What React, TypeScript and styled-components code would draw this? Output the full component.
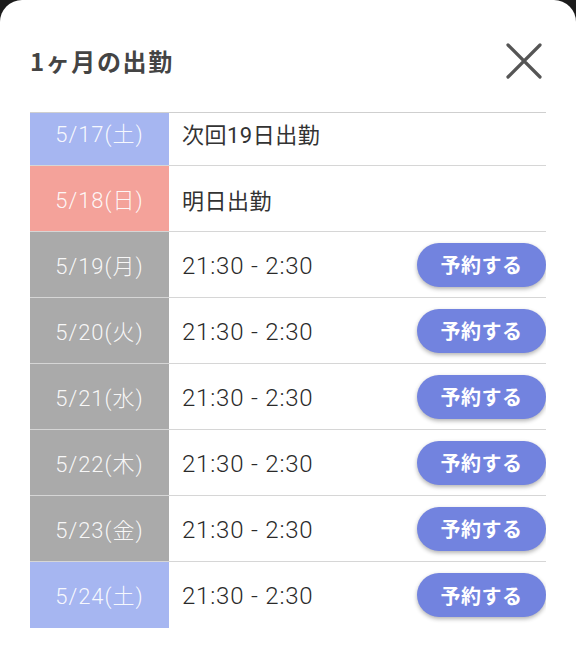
import { createGlobalStyle, styled } from "styled-components";

const GlobalStyle = createGlobalStyle`
  html, body {
    margin: 0;
    padding: 0;
    background: #1c1c1c;
  }
  body {
    font-family: Roboto, "Noto Sans CJK JP", sans-serif;
  }
`;

const Sheet = styled.div`
  background: #fff;
  height: 671px;
  border-radius: 22px 22px 0 0;
  padding: 0 30px;
  box-sizing: border-box;
  overflow: hidden;
`;

const Header = styled.div`
  height: 112px;
  display: flex;
  align-items: center;
  justify-content: space-between;
  padding-top: 8px;
  box-sizing: border-box;
`;

const Title = styled.h2`
  margin: 0;
  font-family: "Noto Sans CJK JP", sans-serif;
  font-size: 24px;
  font-weight: 700;
  color: #444;
  letter-spacing: 1.6px;
`;

const CloseButton = styled.button`
  border: none;
  background: none;
  padding: 0;
  width: 36px;
  height: 36px;
  margin-right: 4px;
  margin-top: 2px;
  cursor: pointer;
  display: flex;
  align-items: center;
  justify-content: center;
`;

const Viewport = styled.div`
  border-top: 1px solid #cfcfcf;
  height: 518px;
  overflow: hidden;
`;

const List = styled.div`
  margin-top: -13px;
`;

const Row = styled.div<{ $last?: boolean }>`
  display: flex;
  align-items: stretch;
  height: 66px;
  box-sizing: border-box;
  border-bottom: ${({ $last }) => ($last ? "none" : "1px solid #d6d6d6")};
`;

const dateColors = {
  sat: "#a6b6f1",
  sun: "#f4a29a",
  weekday: "#aaaaaa",
};

const DateCell = styled.div<{ $kind: keyof typeof dateColors }>`
  width: 139px;
  flex: none;
  background: ${({ $kind }) => dateColors[$kind]};
  color: rgba(255, 255, 255, 0.92);
  font-size: 22px;
  font-weight: 300;
  letter-spacing: 1px;
  display: flex;
  align-items: center;
  justify-content: center;
  padding-bottom: 2px;
  box-sizing: border-box;
`;

const Body = styled.div`
  flex: 1;
  display: flex;
  align-items: center;
  justify-content: space-between;
  padding-left: 13px;
`;

const Note = styled.span`
  font-size: 22px;
  letter-spacing: 0.5px;
  color: #333;
`;

const Time = styled.span`
  font-size: 24px;
  font-weight: 300;
  letter-spacing: 0.8px;
  color: #2a2a2a;
  padding-top: 2px;
`;

const ReserveButton = styled.button`
  width: 129px;
  height: 44px;
  border: none;
  border-radius: 22px;
  background: #7283df;
  color: #fff;
  font-family: "Noto Sans CJK JP", sans-serif;
  font-size: 20px;
  font-weight: 700;
  letter-spacing: 0.5px;
  box-shadow: 0 2px 4px rgba(0, 0, 0, 0.3);
  cursor: pointer;
`;

type Day = {
  date: string;
  kind: keyof typeof dateColors;
  note?: string;
  time?: string;
};

const days: Day[] = [
  { date: "5/17(土)", kind: "sat", note: "次回19日出勤" },
  { date: "5/18(日)", kind: "sun", note: "明日出勤" },
  { date: "5/19(月)", kind: "weekday", time: "21:30 - 2:30" },
  { date: "5/20(火)", kind: "weekday", time: "21:30 - 2:30" },
  { date: "5/21(水)", kind: "weekday", time: "21:30 - 2:30" },
  { date: "5/22(木)", kind: "weekday", time: "21:30 - 2:30" },
  { date: "5/23(金)", kind: "weekday", time: "21:30 - 2:30" },
  { date: "5/24(土)", kind: "sat", time: "21:30 - 2:30" },
];

export default function App() {
  return (
    <>
      <GlobalStyle />
      <Sheet>
        <Header>
          <Title>1ヶ月の出勤</Title>
          <CloseButton aria-label="閉じる">
            <svg width="36" height="36" viewBox="0 0 36 36">
              <path
                d="M2 2 L34 34 M34 2 L2 34"
                stroke="#555"
                strokeWidth="3.2"
                strokeLinecap="round"
                fill="none"
              />
            </svg>
          </CloseButton>
        </Header>
        <Viewport>
          <List>
            {days.map((d, i) => (
              <Row key={d.date} $last={i === days.length - 1}>
                <DateCell $kind={d.kind}>{d.date}</DateCell>
                <Body>
                  {d.note && <Note>{d.note}</Note>}
                  {d.time && (
                    <>
                      <Time>{d.time}</Time>
                      <ReserveButton>予約する</ReserveButton>
                    </>
                  )}
                </Body>
              </Row>
            ))}
          </List>
        </Viewport>
      </Sheet>
    </>
  );
}
